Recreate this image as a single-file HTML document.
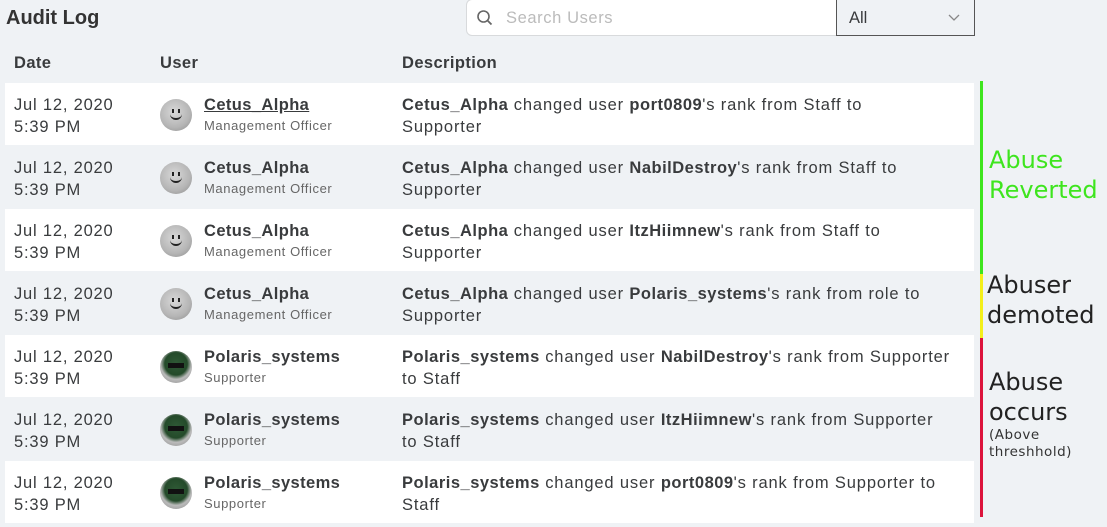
<!DOCTYPE html>
<html><head><meta charset="utf-8"><style>
*{margin:0;padding:0;box-sizing:border-box}
body{width:1107px;height:527px;background:#eff2f5;font-family:"Liberation Sans",sans-serif;color:#393b3d;position:relative;overflow:hidden}
.a{position:absolute;white-space:nowrap}
.row{position:absolute;left:5px;width:969px;height:62px}
.w{background:#fff}
.t{font-size:16.5px;letter-spacing:0.4px}
.d{font-size:16.5px;letter-spacing:0.85px}
b{font-weight:bold;letter-spacing:0.5px}
.av{position:absolute;left:160px;width:32px;height:32px;border-radius:50%;overflow:hidden}
.ann{font-family:"DejaVu Sans",sans-serif;position:absolute;white-space:nowrap}
</style></head><body>
<div class="a" style="left:6px;top:7px;font-size:20px;font-weight:bold;color:#333">Audit Log</div>
<div class="a" style="left:466px;top:-1px;width:371px;height:37px;background:#fff;border:1px solid #d8dadc;border-radius:6px 0 0 6px"></div>
<svg class="a" style="left:476px;top:9px" width="18" height="18" viewBox="0 0 18 18"><circle cx="7.5" cy="7.5" r="5.5" fill="none" stroke="#666" stroke-width="1.6"/><path d="M11.5 11.5L15.5 15.5" stroke="#666" stroke-width="1.8"/></svg>
<div class="a" style="left:506px;top:9px;font-size:16.5px;color:#bbb;letter-spacing:0.6px">Search Users</div>
<div class="a" style="left:836px;top:-1px;width:139px;height:37px;border:1px solid #555;background:#eff2f5"></div>
<div class="a" style="left:849px;top:9px;font-size:16.5px;color:#393b3d">All</div>
<svg class="a" style="left:948px;top:14px" width="12" height="8"><path d="M1 1L6 6L11 1" fill="none" stroke="#888" stroke-width="1.3"/></svg>
<div class="a t" style="left:14px;top:54px;font-weight:bold">Date</div>
<div class="a t" style="left:160px;top:54px;font-weight:bold">User</div>
<div class="a t" style="left:402px;top:54px;font-weight:bold">Description</div>

<div class="row w" style="top:83px"></div>
<div class="row w" style="top:209px"></div>
<div class="row w" style="top:335px"></div>
<div class="row w" style="top:461px"></div>

<div id="rows"></div>
<script>
var R=[["Cetus_Alpha","Management Officer","port0809","Staff to<br>Supporter",0,1],
["Cetus_Alpha","Management Officer","NabilDestroy","Staff to<br>Supporter",0,0],
["Cetus_Alpha","Management Officer","ItzHiimnew","Staff to<br>Supporter",0,0],
["Cetus_Alpha","Management Officer","Polaris_systems","role to<br>Supporter",0,0],
["Polaris_systems","Supporter","NabilDestroy","Supporter<br>to Staff",1,0],
["Polaris_systems","Supporter","ItzHiimnew","Supporter<br>to Staff",1,0],
["Polaris_systems","Supporter","port0809","Supporter to<br>Staff",1,0]];
var h="";
R.forEach(function(r,i){var y=83+63*i;
h+='<div class="a t" style="left:14px;top:'+(y+11)+'px;line-height:22px;letter-spacing:0.8px">Jul 12, 2020<br>5:39 PM</div>';
var av=r[4]?'<div class="av" style="top:'+(y+16)+'px;background:radial-gradient(circle at 50% 40%,#2f5a36 0,#244a2a 45%,#bbb 62%,#888 100%)"><div style="position:absolute;left:8px;top:12px;width:16px;height:5px;background:#111"></div></div>'
:'<div class="av" style="top:'+(y+16)+'px;background:radial-gradient(circle at 45% 40%,#d8d8d8 0,#b5b5b5 60%,#888 100%)"><div style="position:absolute;left:12px;top:10px;width:2px;height:4px;background:#222"></div><div style="position:absolute;left:18px;top:10px;width:2px;height:4px;background:#222"></div><div style="position:absolute;left:10px;top:14px;width:12px;height:7px;border-bottom:2px solid #222;border-radius:0 0 7px 7px"></div></div>';
h+=av;
h+='<div class="a" style="left:204px;top:'+(y+13)+'px;font-size:16.5px;letter-spacing:0.4px;font-weight:bold;color:#393b3d;'+(r[5]?'text-decoration:underline':'')+'">'+r[0]+'</div>';
h+='<div class="a" style="left:204px;top:'+(y+35)+'px;font-size:13px;color:#666;letter-spacing:0.6px">'+r[1]+'</div>';
h+='<div class="a d" style="left:402px;top:'+(y+11)+'px;line-height:22px"><b>'+r[0]+'</b> changed user <b>'+r[2]+'</b>\'s rank from '+r[3]+'</div>';
});
document.getElementById("rows").innerHTML=h;
</script>

<div class="a" style="left:980px;top:81px;width:3px;height:193px;background:#3ee51e"></div>
<div class="a" style="left:980px;top:274px;width:3px;height:64px;background:#f3ef1a"></div>
<div class="a" style="left:980px;top:338px;width:3px;height:179px;background:#dc143c"></div>
<div class="ann" style="left:989px;top:145px;font-size:24px;line-height:30px;color:#3ee51e">Abuse<br>Reverted</div>
<div class="ann" style="left:987px;top:270px;font-size:24px;line-height:30px;color:#222">Abuser<br>demoted</div>
<div class="ann" style="left:989px;top:367px;font-size:24px;line-height:30px;color:#222">Abuse<br>occurs</div>
<div class="ann" style="left:989px;top:427px;font-size:13.5px;line-height:17px;color:#333;letter-spacing:0.5px">(Above<br>threshhold)</div>
</body></html>
